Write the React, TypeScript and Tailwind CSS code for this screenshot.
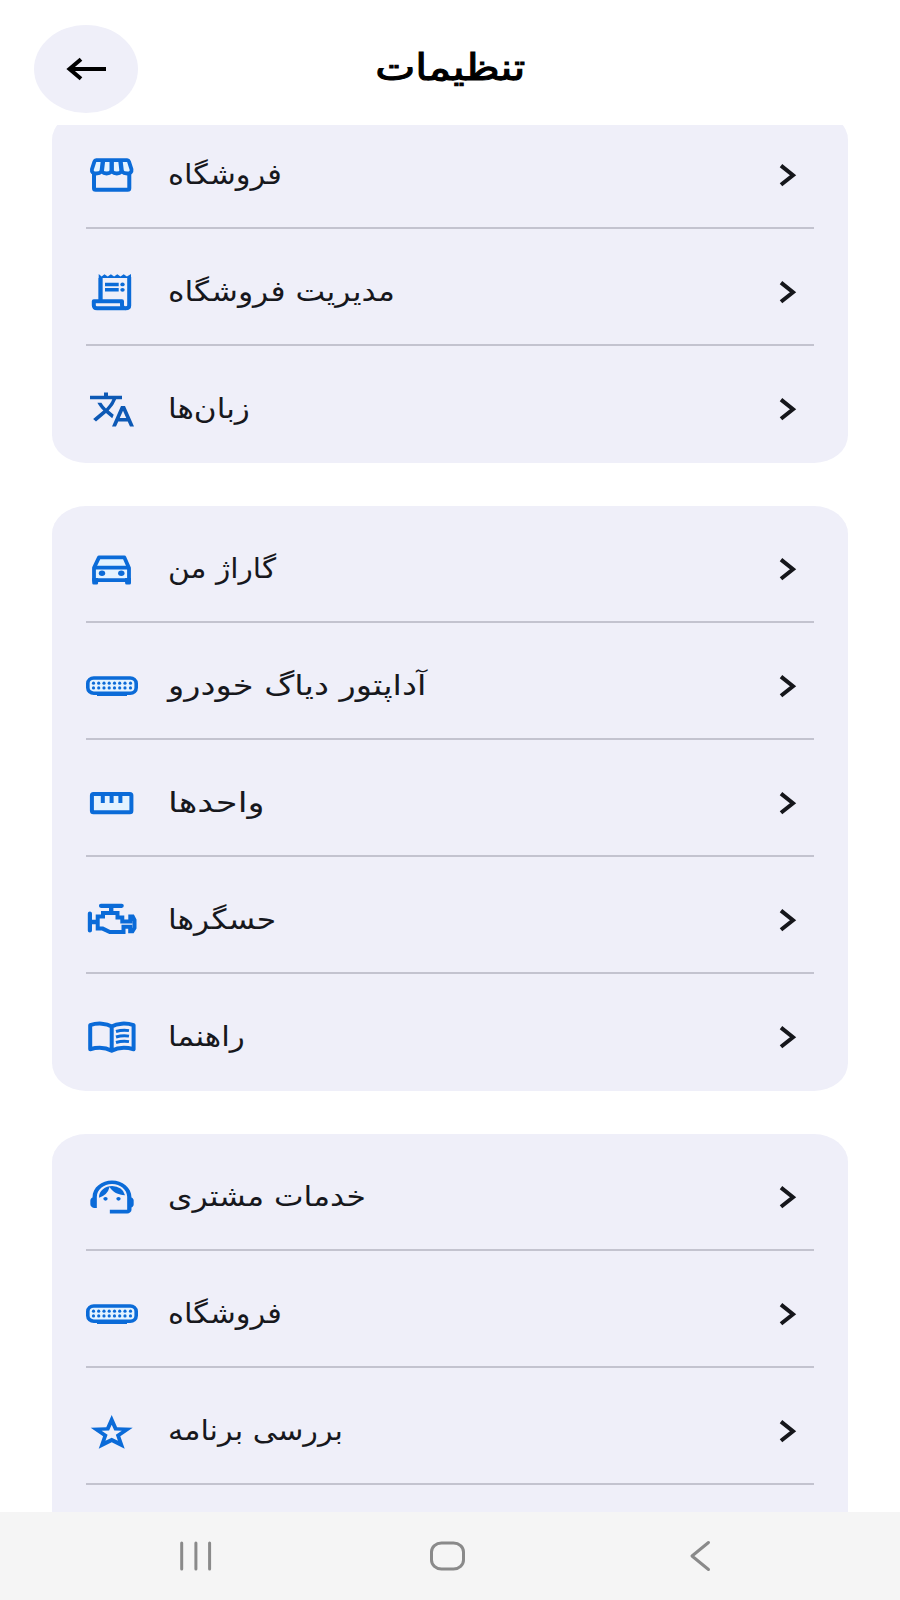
import type { ReactNode } from 'react';
import { MdTranslate, MdOutlineSupportAgent } from 'react-icons/md';

const TINT = '#e4f3ff';

function Glyph({ children }: { children: ReactNode }) {
  return (
    <svg
      className="h-11 w-[52px] text-[#0b6bd8]"
      viewBox="0 0 52 44"
      fill="none"
      stroke="currentColor"
      strokeWidth="4"
      strokeLinejoin="round"
    >
      {children}
    </svg>
  );
}

const StoreIcon = () => (
  <Glyph>
    <path d="M8 21v14.200q0 1.600 1.600 1.600h32.100q1.600 0 1.600-1.600V21" />
    <path
      d="M10.200 7.200h31q1.300 0 1.800 1.500l2.500 7.600q.6 4-4.200 4.200-3.600 0-5.500-2-2.200 2-5 2t-5.100-2q-2.300 2-5.100 2t-5-2q-1.900 2-5.500 2-4.800-.2-4.200-4.200l2.500-7.600q.5-1.500 1.800-1.500z"
      fill={TINT}
      strokeWidth="3.800"
    />
    <path d="M17 7.500l-1.300 11M25.700 7.500v11M34.400 7.500l1.300 11" strokeWidth="4.400" />
  </Glyph>
);

const ReceiptIcon = () => (
  <Glyph>
    <path
      d="M12.700 4l2.900 2.500 2.900-2.200 3.200 2.200 3.200-2.200 3.200 2.200 3.200-2.200 3.200 2.200 3.200-2.200 3.200 2.200L45 4v4h-3.600H16.300v22h-3.600z"
      fill="currentColor"
      stroke="none"
    />
    <path d="M14.500 8v22M43.200 7v28.500q0 2.800-3.500 2.800" />
    <path d="M40 38.200H11q-3.200 0-3.200-3v-4H36v4q0 3 3.500 3" />
    <path d="M19 14.400h13.700M19 19.800h13.700" strokeWidth="3.500" />
    <g fill="currentColor" stroke="none">
      <ellipse cx="36.500" cy="14.400" rx="2.200" ry="1.900" />
      <ellipse cx="36.500" cy="19.800" rx="2.200" ry="1.900" />
    </g>
  </Glyph>
);

const CarIcon = () => (
  <Glyph>
    <path d="M13 10.400h25.400l4.600 10.500v12.300H8V20.900z" fill={TINT} strokeWidth="3.800" />
    <path d="M8 20.600h35" strokeWidth="3.600" />
    <path d="M6.200 31h5.900v4.900q0 1.500-1.500 1.500H7.700q-1.500 0-1.500-1.500zM39.100 31H45v4.900q0 1.500-1.500 1.500h-2.900q-1.500 0-1.500-1.500z" fill="currentColor" stroke="none" />
    <g fill="currentColor" stroke="none">
      <ellipse cx="16" cy="26.200" rx="3.200" ry="2.700" />
      <ellipse cx="35.300" cy="26.200" rx="3.200" ry="2.700" />
    </g>
  </Glyph>
);

const RulerIcon = () => (
  <Glyph>
    <rect x="5.900" y="12.900" width="39.500" height="18.300" rx="1.500" fill={TINT} />
    <path d="M16.800 13v9M25.600 13v9M34.400 13v9" strokeWidth="4" />
  </Glyph>
);

const BookIcon = () => (
  <Glyph>
    <path d="M25.700 11.500C20.500 8.300 11.500 7.600 4.200 10.200v24c7.300-2 15-1.900 21.500 1.500 6.500-3.400 14.200-3.500 21.900-1.500v-24C40 7.600 31 8.300 25.700 11.500zv24" />
    <path d="M30 16.500q6.500-2 13-.9M30 22q6.500-2 13-.9M30 27.500q6.500-2 13-.9" strokeWidth="2.900" />
  </Glyph>
);

const AdapterIcon = () => {
  const cols = [7.5, 12.7, 18, 23.2, 28.5, 33.7, 39, 44.5];
  return (
    <Glyph>
      <rect x="1.800" y="14" width="48.400" height="15.200" rx="6" ry="5.500" fill={TINT} strokeWidth="3.600" />
      <path d="M11 29h30v3H11z" fill="currentColor" stroke="none" />
      {cols.map((x) => (
        <g key={x} fill="currentColor" stroke="none">
          <circle cx={x} cy="19.200" r="1.600" />
          <circle cx={x} cy="23.900" r="1.600" />
        </g>
      ))}
    </Glyph>
  );
};

const EngineIcon = () => (
  <Glyph>
    <path d="M15 7.800h20.700M3.900 15.500v17" strokeWidth="4.200" strokeLinecap="round" />
    <path d="M25.200 9v6M4 24h7" strokeWidth="4.400" />
    <path
      d="M11.700 18.400H17v-3.300h14.500v4.400h4.800v4h8v-5h2.400l1.800 3.500v8l-2 3.200h-2.300v-4.400h-6.700v5.300H23.800L16.700 30.600h-5z"
      strokeWidth="4"
      strokeLinejoin="miter"
    />
  </Glyph>
);

const starPath = (k: number) => {
  const unit = [
    [0, -1], [0.245, -0.335], [0.951, -0.309], [0.39, 0.14], [0.588, 0.809],
    [0, 0.46], [-0.588, 0.809], [-0.39, 0.14], [-0.951, -0.309], [-0.245, -0.335],
  ];
  return `M${unit.map(([x, y]) => `${25.7 + x * 22.1 * k} ${24.6 + y * 18.6 * k}`).join('L')}z`;
};

const StarIcon = () => (
  <Glyph>
    <path d={starPath(1) + starPath(0.48)} fill="currentColor" fillRule="evenodd" stroke="none" />
  </Glyph>
);

const TranslateIcon = () => (
  <MdTranslate className="mr-[2.500px] ml-[1.500px] h-[41px] w-[48px] text-[#0d59b5]" preserveAspectRatio="none" />
);

const AgentIcon = () => (
  <MdOutlineSupportAgent className="h-11 w-[52px] text-[#0b6bd8]" preserveAspectRatio="none" />
);

const Chevron = () => (
  <svg className="mr-px h-11 w-[52px] text-[#15161b]" viewBox="0 0 52 44" fill="none" stroke="currentColor" strokeWidth="4">
    <path d="M20 12.600L32 22.200 20 31.800" />
  </svg>
);

function Row({ icon, text, stretch, last }: { icon: ReactNode; text: string; stretch: string; last?: boolean }) {
  return (
    <div className={`flex h-[117px] items-center border-b-2 pt-[11px] ${last ? 'border-transparent' : 'border-[#c3c3cf]'}`}>
      {icon}
      <div className="ml-[30px] flex-1">
        <span
          dir="rtl"
          className={`block w-fit origin-left whitespace-nowrap font-['DejaVu_Sans',sans-serif] text-[28px] leading-[44px] text-[#17181d] ${stretch}`}
        >
          {text}
        </span>
      </div>
      <Chevron />
    </div>
  );
}

function Card({ children }: { children: ReactNode }) {
  return <section className="rounded-[34px/28px] bg-[#efeff9] px-[34px]">{children}</section>;
}

export default function App() {
  return (
    <div className="flex h-[1600px] w-[900px] flex-col overflow-hidden bg-white">
      <header className="grid h-[125px] shrink-0 grid-cols-[1fr_auto_1fr] items-start pt-[25px]">
        <button className="ml-[34px] flex h-[88px] w-[104px] items-center justify-center rounded-[50%] bg-[#efeff9]">
          <svg className="h-11 w-[52px]" viewBox="0 0 52 44" fill="none" stroke="black" strokeWidth="4">
            <path d="M46 22H10M21 12.300L9.500 22 21 31.700" />
          </svg>
        </button>
        <h1
          dir="rtl"
          className="scale-x-[1.150] whitespace-nowrap font-['DejaVu_Sans',sans-serif] text-[37px] font-normal leading-[86px] text-black [-webkit-text-stroke:1.100px_black]"
        >
          تنظیمات
        </h1>
      </header>
      <main className="min-h-0 flex-1 overflow-hidden px-[52px]">
        <div className="-mt-[13px] flex flex-col gap-[43px]">
          <Card>
            <Row icon={<StoreIcon />} text="فروشگاه" stretch="scale-x-[1.09]" />
            <Row icon={<ReceiptIcon />} text="مدیریت فروشگاه" stretch="scale-x-[1.125]" />
            <Row icon={<TranslateIcon />} text="زبان‌ها" stretch="scale-x-[1.11]" last />
          </Card>
          <Card>
            <Row icon={<CarIcon />} text="گاراژ من" stretch="scale-x-[1.06]" />
            <Row icon={<AdapterIcon />} text="آداپتور دیاگ خودرو" stretch="scale-x-[1.2]" />
            <Row icon={<RulerIcon />} text="واحدها" stretch="scale-x-[1.26]" />
            <Row icon={<EngineIcon />} text="حسگرها" stretch="scale-x-[1.12]" />
            <Row icon={<BookIcon />} text="راهنما" stretch="scale-x-[1.11]" last />
          </Card>
          <Card>
            <Row icon={<AgentIcon />} text="خدمات مشتری" stretch="scale-x-[1.12]" />
            <Row icon={<AdapterIcon />} text="فروشگاه" stretch="scale-x-[1.09]" />
            <Row icon={<StarIcon />} text="بررسی برنامه" stretch="scale-x-[1.08]" />
            <div className="h-[117px]" />
          </Card>
        </div>
      </main>
      <nav className="flex h-[88px] w-full shrink-0 bg-[#f5f5f5]">
        <svg className="h-[88px] w-[900px]" viewBox="0 0 900 88" fill="none" stroke="#8a8a8a" strokeWidth="3" strokeLinecap="round" strokeLinejoin="round">
          <path d="M181.700 31v26M195.900 31v26M209.600 31v26" />
          <rect x="431.500" y="31" width="32" height="26" rx="10" ry="9" />
          <path d="M708.500 30.500L692 44l16.500 13.500" />
        </svg>
      </nav>
    </div>
  );
}
